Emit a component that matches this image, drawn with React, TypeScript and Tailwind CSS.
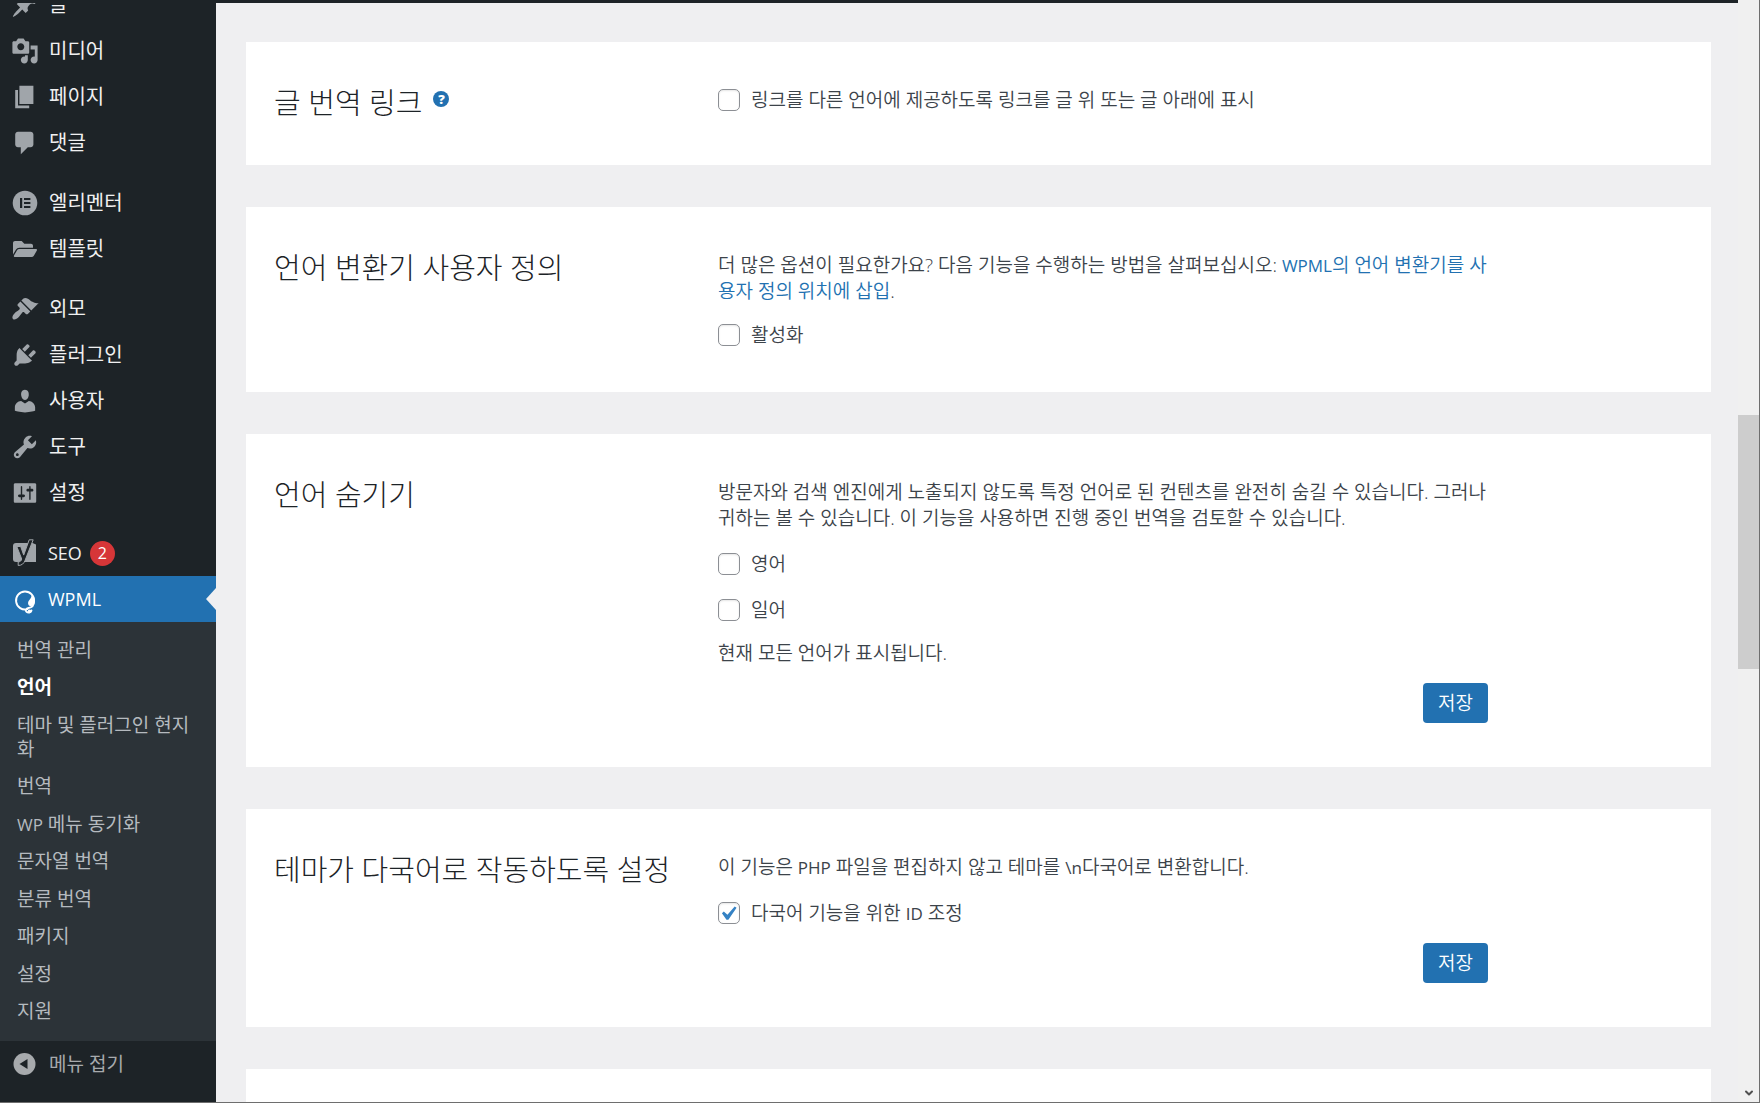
import { useState, type ReactNode } from "react";
import { FaFolderOpen } from "react-icons/fa";
import { ChevronDown } from "lucide-react";
import clsx from "clsx";

interface MenuItem {
  id: string;
  name: string;
  icon: ReactNode;
  latin?: boolean;
  badge?: number;
}

function Dashicon({ d }: { d: string }) {
  return (
    <svg viewBox="0 0 20 20" className="size-7" fill="currentColor" aria-hidden="true">
      <path d={d} />
    </svg>
  );
}

function ElementorIcon() {
  return (
    <svg viewBox="0 0 28 28" className="size-7" aria-hidden="true">
      <circle cx="14" cy="14" r="12.3" fill="currentColor" />
      <path d="M9 9h2.2v10H9zM13 9h6.4v2H13zM13 13h6.4v2H13zM13 17h6.4v2H13z" fill="#1d2327" />
    </svg>
  );
}

function YoastIcon() {
  return (
    <svg viewBox="0 0 28 28" className="size-7" aria-hidden="true">
      <path d="M5 4h16.5l3.5 1.5V23H5a3 3 0 0 1-3-3V7a3 3 0 0 1 3-3z" fill="currentColor" />
      <path d="M18.2.8h4L14 21.5c-1.200 3.200-3.200 4.900-6.800 5V23c2.200-.3 3.200-1.300 3.500-3L5.800 7.500h3.900l3 8.600z" fill="#1d2327" stroke="currentColor" strokeWidth="1" />
    </svg>
  );
}

function WpmlIcon() {
  return (
    <svg viewBox="1 0 28 28" className="size-7" fill="none" stroke="currentColor" aria-hidden="true">
      <path d="M17.500 22.200A9 9 0 1 1 24 14.500c0 4-2.500 6-5.500 6.500-2.500.5-3.500 2.500-2 3.800 1.600 1.400 4.500.9 5-1.300" strokeWidth="1.900" strokeLinecap="round" />
      <path d="M21.500 8c2.500 1 3.700 4 3.500 6.500-.3 3-2.500 5-4.800 4.500-2.400-.6-2.700-3.500-1.200-5.500 1.400-1.900 2.600-3 2.500-5.500z" fill="currentColor" stroke="none" />
      <circle cx="19.500" cy="24.300" r="1.800" fill="currentColor" stroke="none" />
    </svg>
  );
}

const menuGroups: MenuItem[][] = [
  [
    { id: "posts", name: "글", icon: <Dashicon d="M10.44 3.02l1.820-1.820 6.360 6.350-1.830 1.820c-1.050-.68-2.480-.57-3.410.36l-.75.75c-.92.93-1.040 2.350-.35 3.410l-1.830 1.820-2.410-2.410-2.800 2.790c-.42.42-3.380 2.710-3.800 2.290s1.860-3.390 2.280-3.810l2.790-2.790L4.100 9.360l1.830-1.820c1.050.69 2.480.57 3.400-.36l.75-.75c.93-.92 1.050-2.350.36-3.410z" /> },
    { id: "media", name: "미디어", icon: <Dashicon d="M13 11V4c0-.55-.45-1-1-1h-1.670L9 1H5L3.670 3H2c-.55 0-1 .45-1 1v7c0 .55.45 1 1 1h10c.55 0 1-.45 1-1zM7 4.500c1.380 0 2.500 1.120 2.500 2.500S8.380 9.500 7 9.500 4.500 8.380 4.500 7 5.620 4.500 7 4.500zM14 6h5v10.500c0 1.380-1.120 2.500-2.500 2.500S14 17.880 14 16.500s1.120-2.500 2.500-2.500c.17 0 .34.02.5.05V9h-3V6zm-4 8.050V13h2v3.500c0 1.380-1.120 2.500-2.500 2.500S7 17.880 7 16.500 8.120 14 9.500 14c.17 0 .34.02.5.05z" /> },
    { id: "pages", name: "페이지", icon: <Dashicon d="M6 15V2h10v13H6zm-1 1h8v2H3V5h2v11z" /> },
    { id: "comments", name: "댓글", icon: <Dashicon d="M5 2h9c1.100 0 2 .9 2 2v7c0 1.100-.9 2-2 2h-2l-5 5v-5H5c-1.100 0-2-.9-2-2V4c0-1.100.9-2 2-2z" /> },
  ],
  [
    { id: "elementor", name: "엘리멘터", icon: <ElementorIcon /> },
    { id: "templates", name: "템플릿", icon: <FaFolderOpen className="size-6" /> },
  ],
  [
    { id: "appearance", name: "외모", icon: <Dashicon d="M14.480 11.060L7.410 3.990l1.500-1.500c.5-.56 2.300-.47 3.510.32 1.210.8 1.430 1.280 2.910 2.100 1.180.64 2.450 1.260 4.450.85zm-.71.71L6.700 4.700 4.930 6.470c-.39.39-.39 1.020 0 1.410l1.060 1.060c.39.39.39 1.030 0 1.420-.6.6-1.430 1.110-2.210 1.690-.35.26-.7.53-1.010.84C1.430 14.230.4 16.080 1.400 17.070c.99 1 2.840-.03 4.180-1.360.31-.31.58-.66.85-1.020.57-.78 1.080-1.610 1.690-2.210.39-.39 1.020-.39 1.410 0l1.060 1.060c.39.39 1.020.39 1.410 0z" /> },
    { id: "plugins", name: "플러그인", icon: <Dashicon d="M13.110 4.360L9.870 7.600 8 5.730l3.240-3.240c.35-.34 1.050-.2 1.560.32.52.51.66 1.210.31 1.550zm-8 1.770l.91-1.120 9.010 9.010-1.190.84c-.71.71-2.630 1.160-3.820 1.160H6.140L4.900 17.260c-.59.59-1.540.59-2.120 0-.59-.58-.59-1.530 0-2.120l1.240-1.240v-3.880c0-1.130.4-3.190 1.090-3.890zm7.260 3.970l3.240-3.240c.34-.35 1.040-.21 1.550.31.52.51.66 1.210.31 1.550l-3.240 3.250z" /> },
    { id: "users", name: "사용자", icon: <Dashicon d="M10 9.250c-2.270 0-2.730-3.440-2.730-3.440C7 4.020 7.820 2 9.970 2c2.160 0 2.980 2.020 2.710 3.810 0 0-.41 3.440-2.680 3.440zm0 2.570L12.720 10c2.390 0 4.520 2.330 4.520 4.530v2.490s-3.650 1.130-7.240 1.130c-3.650 0-7.240-1.130-7.240-1.130v-2.490c0-2.250 1.940-4.480 4.470-4.480z" /> },
    { id: "tools", name: "도구", icon: <Dashicon d="M16.680 9.770c-1.340 1.340-3.300 1.670-4.950.99l-5.410 6.520c-.99.99-2.590.99-3.580 0s-.99-2.590 0-3.570l6.520-5.420c-.68-1.650-.35-3.610.99-4.950 1.280-1.280 3.120-1.620 4.720-1.060l-2.890 2.890 2.820 2.820 2.860-2.870c.53 1.580.18 3.390-1.080 4.650zM3.810 16.210c.4.39 1.040.39 1.430 0 .4-.4.4-1.040 0-1.430-.39-.4-1.030-.4-1.430 0-.39.39-.39 1.030 0 1.430z" /> },
    { id: "settings", name: "설정", icon: <Dashicon d="M18 16V4c0-.55-.45-1-1-1H3c-.55 0-1 .45-1 1v12c0 .55.45 1 1 1h14c.55 0 1-.45 1-1zM8 11h1c.55 0 1 .45 1 1s-.45 1-1 1H8v1.500c0 .28-.22.5-.5.5s-.5-.22-.5-.5V13H6c-.55 0-1-.45-1-1s.45-1 1-1h1V5.500c0-.28.22-.5.5-.5s.5.22.5.5V11zm5-2h-1c-.55 0-1-.45-1-1s.45-1 1-1h1V5.500c0-.28.22-.5.5-.5s.5.22.5.5V7h1c.55 0 1 .45 1 1s-.45 1-1 1h-1v5.500c0 .28-.22.5-.5.5s-.5-.22-.5-.5V9z" /> },
  ],
  [
    { id: "seo", name: "SEO", icon: <YoastIcon />, latin: true, badge: 2 },
    { id: "wpml", name: "WPML", icon: <WpmlIcon />, latin: true },
  ],
];

const submenu: { id: string; name: ReactNode }[] = [
  { id: "tm", name: "번역 관리" },
  { id: "languages", name: "언어" },
  { id: "localization", name: "테마 및 플러그인 현지화" },
  { id: "translations", name: "번역" },
  { id: "menu-sync", name: <><Latin>WP</Latin> 메뉴 동기화</> },
  { id: "strings", name: "문자열 번역" },
  { id: "taxonomy", name: "분류 번역" },
  { id: "packages", name: "패키지" },
  { id: "wpml-settings", name: "설정" },
  { id: "support", name: "지원" },
];

// Latin letters run a little smaller than the Hangul around them
function Latin({ children }: { children: ReactNode }) {
  return <span className="text-[17px] leading-none font-normal">{children}</span>;
}

function SideMenuItem({ item, active }: { item: MenuItem; active: boolean }) {
  return (
    <li>
      <a
        href={`#${item.id}`}
        className={clsx(
          "relative flex h-[46px] items-center pl-[11px]",
          active ? "bg-[#2271b1] text-white" : "text-[#f0f0f1]"
        )}
      >
        <span className={clsx("flex w-7 shrink-0 justify-center", active ? "mt-1 text-white" : "text-[#a0a5aa]")}>
          {item.icon}
        </span>
        <span className={clsx(item.latin ? "ml-[9px] text-[18px]" : "ml-[10px] text-[20px]")}>{item.name}</span>
        {item.badge && (
          <span className="ml-2 flex size-[25px] items-center justify-center rounded-full bg-[#d63638] text-[16px] text-white">
            {item.badge}
          </span>
        )}
        {active && (
          <span className="absolute top-3 right-0 border-y-[11px] border-r-[10px] border-y-transparent border-r-[#efeff1]" />
        )}
      </a>
    </li>
  );
}

function Sidebar() {
  return (
    <aside className="w-[216px] shrink-0 overflow-hidden bg-[#1d2327]">
      <nav className="-mt-[21px]">
        <div className="flex flex-col gap-[14px]">
          {menuGroups.map((group, i) => (
            <ul key={i}>
              {group.map((item) => (
                <SideMenuItem key={item.id} item={item} active={item.id === "wpml"} />
              ))}
            </ul>
          ))}
        </div>
        <ul className="flex min-h-[419px] flex-col justify-between bg-[#2c3338] pt-[10px] pb-3 text-[19px] leading-6">
          {submenu.map((sub) => (
            <li key={sub.id}>
              <a
                href={`#${sub.id}`}
                className={clsx(
                  "block py-[6px] pr-4 pl-[17px] break-all",
                  sub.id === "languages" ? "font-bold text-white" : "text-[#b5babf]"
                )}
              >
                {sub.name}
              </a>
            </li>
          ))}
        </ul>
        <button type="button" className="flex h-[46px] w-full items-center pl-[11px] text-[19px] text-[#a7aaad]">
          <svg viewBox="0 0 28 28" className="size-7" aria-hidden="true">
            <circle cx="13.5" cy="14" r="11" fill="currentColor" />
            <path d="M16.5 9v10l-8-5z" fill="#1d2327" />
          </svg>
          <span className="ml-[10px]">메뉴 접기</span>
        </button>
      </nav>
    </aside>
  );
}

function Section({ title, help, children }: { title: string; help?: boolean; children: ReactNode }) {
  return (
    <section className="grid min-h-[123px] grid-cols-[444px_minmax(0,770px)] bg-white pt-[45px] pb-11 pl-7">
      <div className="flex items-start">
        <h2 className="text-[29px] leading-8 font-light text-[#1d2327]">{title}</h2>
        {help && (
          <button
            type="button"
            aria-label="도움말"
            className="mt-1 ml-[11px] flex size-4 items-center justify-center rounded-full bg-[#2271b1] text-[13px] leading-4 font-extrabold text-white"
          >
            ?
          </button>
        )}
      </div>
      <div className="flex flex-col">{children}</div>
    </section>
  );
}

function Check({ children, defaultChecked = false }: { children: ReactNode; defaultChecked?: boolean }) {
  const [checked, setChecked] = useState(defaultChecked);

  return (
    <label className="flex h-[26px] items-center gap-[11px]">
      <span className="relative flex size-[22px] shrink-0">
        <input
          type="checkbox"
          checked={checked}
          onChange={(e) => setChecked(e.target.checked)}
          className="size-[22px] appearance-none rounded-[5px] border border-[#8c8f94] bg-white shadow-[inset_0_1px_2px_rgba(0,0,0,0.1)]"
        />
        {checked && (
          <svg viewBox="3 1.7 15.6 15.6" className="pointer-events-none absolute inset-0 size-[22px]" fill="#3582c4" aria-hidden="true">
            <path d="M14.830 4.890l1.340.94-5.810 8.380H9.020L5.780 9.670l1.340-1.250 2.570 2.400z" />
          </svg>
        )}
      </span>
      <span>{children}</span>
    </label>
  );
}

function SaveButton() {
  return (
    <button type="button" className="mt-[17px] h-10 self-end rounded-[4px] bg-[#2271b1] px-[15px] text-white">
      저장
    </button>
  );
}

export default function App() {
  return (
    <div
      lang="ko"
      className="flex h-screen flex-col overflow-hidden border-b border-[#6e6e6e] bg-[#efeff1] font-['Open_Sans','Noto_Sans_CJK_KR',sans-serif]"
    >
      <div className="flex min-h-0 flex-1">
        <div className="flex min-w-0 flex-1 flex-col">
          <header className="h-[3px] shrink-0 bg-[#1d2327]" />
          <div className="flex min-h-0 flex-1">
            <Sidebar />
            <main className="flex min-w-0 flex-1 flex-col gap-[42px] overflow-hidden pt-[39px] pr-[27px] pl-[30px] text-[19px] leading-[26px] font-[350] break-all text-[#3c434a] *:shrink-0">
              <Section title="글 번역 링크" help>
                <Check>링크를 다른 언어에 제공하도록 링크를 글 위 또는 글 아래에 표시</Check>
              </Section>

              <Section title="언어 변환기 사용자 정의">
                <p className="mb-[18px]">
                  더 많은 옵션이 필요한가요? 다음 기능을 수행하는 방법을 살펴보십시오:{" "}
                  <a href="#custom-switcher" className="text-[#2271b1]">
                    <Latin>WPML</Latin>의 언어 변환기를 사용자 정의 위치에 삽입
                  </a>
                  .
                </p>
                <Check>활성화</Check>
              </Section>

              <Section title="언어 숨기기">
                <p className="mb-5">
                  방문자와 검색 엔진에게 노출되지 않도록 특정 언어로 된 컨텐츠를 완전히 숨길 수 있습니다. 그러나 귀하는 볼 수 있습니다. 이 기능을 사용하면 진행 중인 번역을 검토할 수 있습니다.
                </p>
                <div className="flex flex-col gap-5">
                  <Check>영어</Check>
                  <Check>일어</Check>
                </div>
                <p className="mt-[17px]">현재 모든 언어가 표시됩니다.</p>
                <SaveButton />
              </Section>

              <Section title="테마가 다국어로 작동하도록 설정">
                <p className="mb-5">
                  이 기능은 <Latin>PHP</Latin> 파일을 편집하지 않고 테마를 <Latin>\n</Latin>다국어로 변환합니다.
                </p>
                <Check defaultChecked>
                  다국어 기능을 위한 <Latin>ID</Latin> 조정
                </Check>
                <SaveButton />
              </Section>

              <section className="h-44 bg-white" />
            </main>
          </div>
        </div>

        {/* Scrollbar */}
        <div className="flex w-[22px] shrink-0 flex-col border-r border-[#6e6e6e] bg-[#f0f0f0]">
          <div className="basis-[415px]" />
          <div className="h-[254px] bg-[#cdcdcd]" />
          <ChevronDown className="mt-auto mb-[3px] ml-[5px] size-3 text-[#505050]" strokeWidth={4} />
        </div>
      </div>
    </div>
  );
}
